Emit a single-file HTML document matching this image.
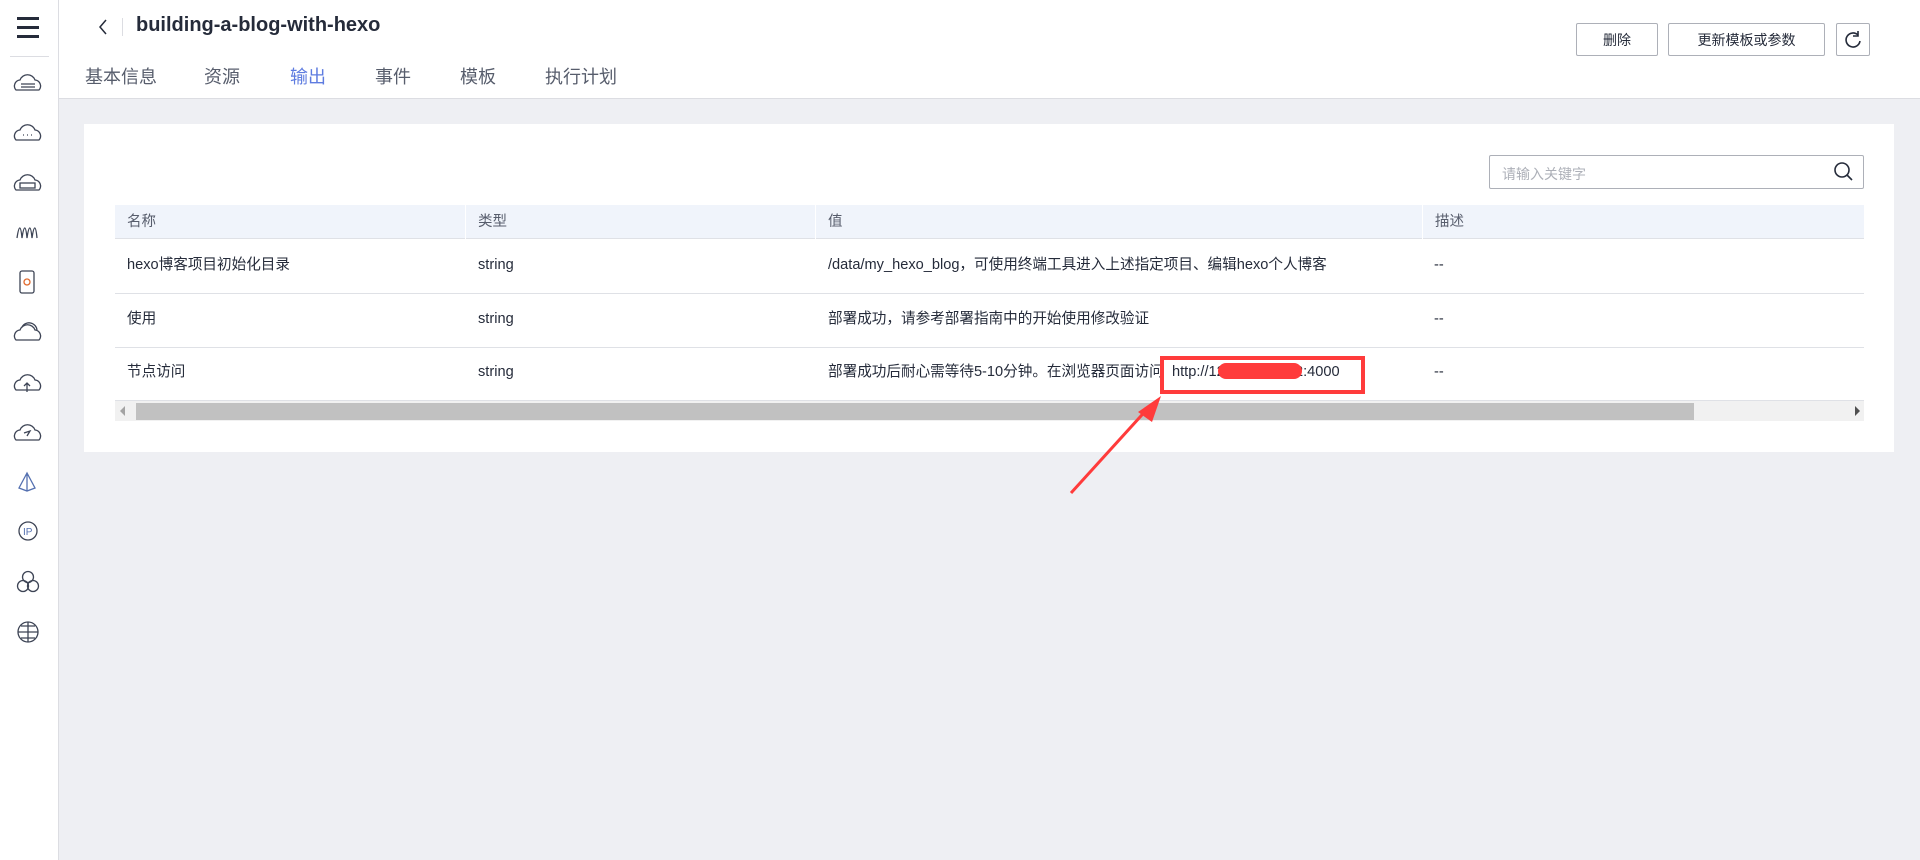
<!DOCTYPE html>
<html><head><meta charset="utf-8"><style>
*{margin:0;padding:0;box-sizing:border-box}
body{width:1920px;height:860px;background:#eeeff3;font-family:"Liberation Sans","Noto Sans CJK SC",sans-serif;color:#252b3a;position:relative;overflow:hidden}
.abs{position:absolute}
#side{left:0;top:0;width:59px;height:860px;background:#fff;border-right:1px solid #dcdde2}
#head{left:59px;top:0;width:1861px;height:99px;background:#fff;border-bottom:1px solid #dcdde2}
.tab{top:63px;font-size:18px;color:#575d6c}
.btn{top:23px;height:33px;border:1px solid #adb0b8;border-radius:2px;background:#fff;font-size:14px;color:#252b3a;display:flex;align-items:center;justify-content:center}
#panel{left:84px;top:124px;width:1810px;height:328px;background:#fff}
.th{top:205px;height:34px;background:#f0f4fb;font-size:14.5px;color:#575d6c;line-height:34px;padding-left:12px;border-bottom:1px solid #dfe1e6}
.cell{font-size:14.6px;line-height:20px;white-space:nowrap}
.rowline{left:115px;width:1749px;height:1px;background:#dfe1e6}
</style></head><body>
<div id="side" class="abs">
 <div class="abs" style="left:17px;top:17px;width:22px;height:3px;background:#252b3a"></div>
 <div class="abs" style="left:17px;top:26px;width:22px;height:3px;background:#252b3a"></div>
 <div class="abs" style="left:17px;top:35px;width:22px;height:3px;background:#252b3a"></div>
 <div class="abs" style="left:10px;top:56px;width:39px;height:1px;background:#dcdde2"></div>
 <svg class="abs" style="left:0;top:0" width="59" height="660" fill="none" stroke="#3d4455" stroke-width="1.3">
  <path d="M16 90 a6 6 0 0 1 4-10 a8 8 0 0 1 15 0 a6 6 0 0 1 4 10 z"/><path d="M21 84h14M21 87h14"/>
  <path d="M16 140 a6 6 0 0 1 4-10 a8 8 0 0 1 15 0 a6 6 0 0 1 4 10 z"/><path d="M23 135h1M27 135h1M31 135h1"/>
  <path d="M16 190 a6 6 0 0 1 4-10 a8 8 0 0 1 15 0 a6 6 0 0 1 4 10 z"/><rect x="20" y="183" width="15" height="5"/>
  <path d="M17 238 q3-20 5 0 q3-20 5 0 q3-20 5 0 q3-20 5 0"/>
  <rect x="20" y="271" width="14" height="22" rx="2"/><circle cx="27" cy="282" r="3" stroke="#e06a2e"/>
  <path d="M16 340 a6 6 0 0 1 4-10 a8 8 0 0 1 15 0 a6 6 0 0 1 4 10 z"/><path d="M22 327 a8 8 0 0 1 15 3"/>
  <path d="M16 390 a6 6 0 0 1 4-10 a8 8 0 0 1 15 0 a6 6 0 0 1 4 10 z"/><path d="M27 392v-9M24 386l3-3 3 3"/>
  <path d="M16 440 a6 6 0 0 1 4-10 a8 8 0 0 1 15 0 a6 6 0 0 1 4 10 z"/><path d="M24 433l6-2-3 5"/>
  <path d="M27 473 l-8 15 l8 3 l8-3 z M27 473v18" stroke="#5470b0"/>
  <circle cx="28" cy="531" r="9"/><text x="23" y="535" font-size="10" fill="#5470b0" stroke="none" font-family="Liberation Sans">IP</text>
  <circle cx="28" cy="577" r="5.5"/><circle cx="23" cy="586" r="5.5"/><circle cx="33" cy="586" r="5.5"/>
  <circle cx="28" cy="632" r="10"/><path d="M18 632h20M28 622v20M21 626h14M21 638h14"/>
 </svg>
</div>
<div id="head" class="abs"></div>
<svg class="abs" style="left:96px;top:18px" width="14" height="18" fill="none" stroke="#252b3a" stroke-width="1.5"><path d="M10 2 L4 9 L10 16"/></svg>
<div class="abs" style="left:122px;top:18px;width:1px;height:18px;background:#dcdde2"></div>
<div class="abs" style="left:136px;top:14px;font-size:20px;font-weight:bold;color:#252b3a">building-a-blog-with-hexo</div>
<div class="abs tab" style="left:85px">基本信息</div>
<div class="abs tab" style="left:204px">资源</div>
<div class="abs tab" style="left:290px;color:#5e7ce0">输出</div>
<div class="abs tab" style="left:375px">事件</div>
<div class="abs tab" style="left:460px">模板</div>
<div class="abs tab" style="left:545px">执行计划</div>
<div class="abs" style="left:290px;top:131px;width:35px;height:3px;background:#5e7ce0"></div>
<div class="abs btn" style="left:1576px;width:82px">删除</div>
<div class="abs btn" style="left:1668px;width:157px">更新模板或参数</div>
<div class="abs btn" style="left:1836px;width:34px"><svg width="20" height="20" fill="none" stroke="#252b3a" stroke-width="1.6"><path d="M15 5 A7 7 0 1 0 17 11"/><path d="M15 1v5h-5"/></svg></div>
<div id="panel" class="abs"></div>
<div class="abs" style="left:1489px;top:155px;width:375px;height:34px;border:1px solid #adb0b8;border-radius:2px;background:#fff;font-size:14px;color:#adb0b8;padding:8px 12px">请输入关键字</div>
<svg class="abs" style="left:1833px;top:161px" width="22" height="22" fill="none" stroke="#252b3a" stroke-width="1.6"><circle cx="9" cy="9" r="7"/><path d="M14 14l5 5"/></svg>
<div class="abs th" style="left:115px;width:350px">名称</div>
<div class="abs th" style="left:466px;width:349px">类型</div>
<div class="abs th" style="left:816px;width:606px">值</div>
<div class="abs th" style="left:1423px;width:441px">描述</div>
<div class="abs rowline" style="top:293px"></div>
<div class="abs rowline" style="top:347px"></div>
<div class="abs rowline" style="top:400px"></div>
<div class="abs cell" style="left:127px;top:255px">hexo博客项目初始化目录</div>
<div class="abs cell" style="left:478px;top:255px">string</div>
<div class="abs cell" style="left:828px;top:255px">/data/my_hexo_blog，可使用终端工具进入上述指定项目、编辑hexo个人博客</div>
<div class="abs cell" style="left:1434px;top:255px">--</div>
<div class="abs cell" style="left:127px;top:309px">使用</div>
<div class="abs cell" style="left:478px;top:309px">string</div>
<div class="abs cell" style="left:828px;top:309px">部署成功，请参考部署指南中的开始使用修改验证</div>
<div class="abs cell" style="left:1434px;top:309px">--</div>
<div class="abs cell" style="left:127px;top:362px">节点访问</div>
<div class="abs cell" style="left:478px;top:362px">string</div>
<div class="abs cell" style="left:828px;top:362px">部署成功后耐心需等待5-10分钟。在浏览器页面访问</div>
<div class="abs cell" style="left:1172px;top:362px">http://12</div>
<div class="abs cell" style="left:1295px;top:362px">2:4000</div>
<div class="abs cell" style="left:1434px;top:362px">--</div>
<div class="abs" style="left:115px;top:401px;width:1749px;height:20px;background:#f1f1f1"></div>
<div class="abs" style="left:136px;top:403px;width:1558px;height:17px;background:#c1c1c1"></div>
<div class="abs" style="left:120px;top:406px;width:0;height:0;border:5px solid transparent;border-right-color:#a3a3a3;border-left:0"></div>
<div class="abs" style="left:1855px;top:406px;width:0;height:0;border:5px solid transparent;border-left-color:#505050;border-right:0"></div>
<div class="abs" style="left:1218px;top:363px;width:84px;height:16px;background:#ff3b3b;border-radius:8px"></div>
<div class="abs" style="left:1160px;top:356px;width:205px;height:38px;border:4px solid #ff3b3b"></div>
<svg class="abs" style="left:1060px;top:390px" width="110" height="110"><path d="M11 103 L90 16" stroke="#ff3b3b" stroke-width="3"/><path d="M101 6 L78 22 L92 32 z" fill="#ff3b3b"/></svg>
</body></html>
